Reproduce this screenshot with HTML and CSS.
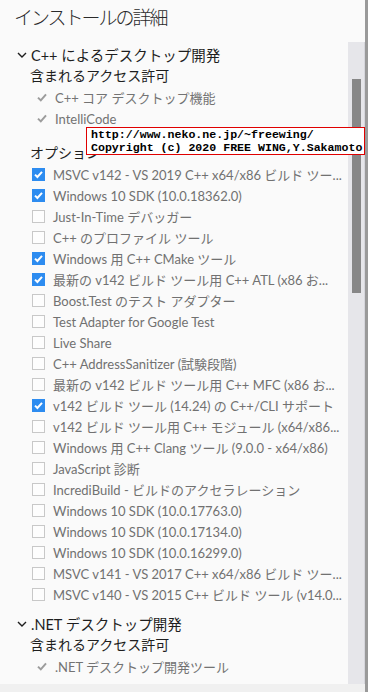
FILE: index.html
```html
<!DOCTYPE html>
<html lang="ja">
<head>
  <meta charset="UTF-8">
  <title>インストールの詳細</title>
  <link rel="stylesheet" href="styles.css">
</head>
<body>
  <div class="window">
    <h1 class="title">インストールの詳細</h1>
    <div class="main">
      <div class="content">
        <div class="group-head">
          <svg class="chevron" width="10" height="6" viewBox="0 0 10 6"><path d="M1 1 L5 5 L9 1" fill="none" stroke="#1e1e1e" stroke-width="1.4"/></svg>
          <span>C++ によるデスクトップ開発</span>
        </div>
        <div class="sub-head">含まれるアクセス許可</div>
        <div class="perm"><svg class="tick" width="10" height="9" viewBox="0 0 10 9"><path d="M1 4.6 L3.8 7.4 L9 1.4" fill="none" stroke="#9c9c9c" stroke-width="2"/></svg>C++ コア デスクトップ機能</div>
        <div class="perm"><svg class="tick" width="10" height="9" viewBox="0 0 10 9"><path d="M1 4.6 L3.8 7.4 L9 1.4" fill="none" stroke="#9c9c9c" stroke-width="2"/></svg>IntelliCode</div>
        <div class="sub-head options-head">オプション</div>
        <ul class="options">
          <li><span class="box checked"></span>MSVC v142 - VS 2019 C++ x64/x86 ビルド ツー...</li>
          <li><span class="box checked"></span>Windows 10 SDK (10.0.18362.0)</li>
          <li><span class="box"></span>Just-In-Time デバッガー</li>
          <li><span class="box"></span>C++ のプロファイル ツール</li>
          <li><span class="box checked"></span>Windows 用 C++ CMake ツール</li>
          <li><span class="box checked"></span>最新の v142 ビルド ツール用 C++ ATL (x86 お...</li>
          <li><span class="box"></span>Boost.Test のテスト アダプター</li>
          <li><span class="box"></span>Test Adapter for Google Test</li>
          <li><span class="box"></span>Live Share</li>
          <li><span class="box"></span>C++ AddressSanitizer (試験段階)</li>
          <li><span class="box"></span>最新の v142 ビルド ツール用 C++ MFC (x86 お...</li>
          <li><span class="box checked"></span>v142 ビルド ツール (14.24) の C++/CLI サポート</li>
          <li><span class="box"></span>v142 ビルド ツール用 C++ モジュール (x64/x86...</li>
          <li><span class="box"></span>Windows 用 C++ Clang ツール (9.0.0 - x64/x86)</li>
          <li><span class="box"></span>JavaScript 診断</li>
          <li><span class="box"></span>IncrediBuild - ビルドのアクセラレーション</li>
          <li><span class="box"></span>Windows 10 SDK (10.0.17763.0)</li>
          <li><span class="box"></span>Windows 10 SDK (10.0.17134.0)</li>
          <li><span class="box"></span>Windows 10 SDK (10.0.16299.0)</li>
          <li><span class="box"></span>MSVC v141 - VS 2017 C++ x64/x86 ビルド ツー...</li>
          <li><span class="box"></span>MSVC v140 - VS 2015 C++ ビルド ツール (v14.0...</li>
        </ul>
        <div class="group-head net-head">
          <svg class="chevron" width="10" height="6" viewBox="0 0 10 6"><path d="M1 1 L5 5 L9 1" fill="none" stroke="#1e1e1e" stroke-width="1.4"/></svg>
          <span>.NET デスクトップ開発</span>
        </div>
        <div class="sub-head">含まれるアクセス許可</div>
        <div class="perm"><svg class="tick" width="10" height="9" viewBox="0 0 10 9"><path d="M1 4.6 L3.8 7.4 L9 1.4" fill="none" stroke="#9c9c9c" stroke-width="2"/></svg>.NET デスクトップ開発ツール</div>
      </div>
      <div class="scrollbar"><div class="thumb"></div></div>
    </div>
    <div class="footer"></div>
  </div>
  <div class="stamp">http://www.neko.ne.jp/~freewing/<br>Copyright (c) 2020 FREE WING,Y.Sakamoto</div>
</body>
</html>
```
FILE: styles.css
```css
html, body {
  margin: 0;
  padding: 0;
}
body {
  background-color: #fafafa;
  font-family: Lato, "Noto Sans CJK JP", sans-serif;
  color: #1e1e1e;
  width: 368px;
  height: 692px;
  overflow: hidden;
}
.window {
  width: 365px;
  height: 692px;
  border-right: 3px solid #9a9a9a;
  display: flex;
  flex-direction: column;
}
.title {
  margin: 0;
  height: 42px;
  padding-left: 14px;
  font-family: "Noto Sans CJK JP", sans-serif;
  font-weight: 300;
  font-size: 19px;
  letter-spacing: -2px;
  line-height: 34px;
  color: #2a2a2a;
}
.main {
  display: flex;
  height: 642px;
}
.content {
  width: 348px;
  overflow: hidden;
  padding-top: 2px;
  font-size: 13px;
}
.group-head {
  display: flex;
  align-items: center;
  height: 21px;
  padding-left: 17px;
  font-size: 14.5px;
}
.chevron {
  margin-right: 4px;
}
.sub-head {
  height: 22px;
  line-height: 22px;
  padding-left: 30px;
  font-size: 14px;
}
.options-head {
  margin-top: 13px;
}
.perm {
  display: flex;
  align-items: center;
  height: 21px;
  padding-left: 37px;
  color: #737373;
  white-space: nowrap;
}
.tick {
  margin-right: 8px;
}
.options {
  list-style: none;
  margin: 0;
  padding: 0;
}
.options li {
  display: flex;
  align-items: center;
  height: 21px;
  padding-left: 32px;
  color: #717171;
  white-space: nowrap;
}
.box {
  width: 11px;
  height: 11px;
  border: 1px solid #c8c8c8;
  background-color: #fdfdfd;
  margin-right: 8px;
  flex-shrink: 0;
}
.box.checked {
  border-color: #2d8cf0;
  background-color: #2d8cf0;
  background-image: url("data:image/svg+xml;utf8,<svg xmlns='http://www.w3.org/2000/svg' width='11' height='11' viewBox='0 0 11 11'><path d='M2 5.6 L4.4 8 L9 2.8' fill='none' stroke='white' stroke-width='2'/></svg>");
}
.net-head {
  margin-top: 8px;
}
.scrollbar {
  width: 17px;
  background-color: #e6e6ea;
  border-right: 1px solid #d6d6dc;
  box-sizing: border-box;
  padding-top: 37px;
  padding-left: 4px;
}
.thumb {
  width: 9px;
  height: 214px;
  background-color: #878787;
}
.footer {
  flex: 1;
  background-color: #f0f0f0;
}
.stamp {
  position: absolute;
  left: 86px;
  top: 127px;
  width: 273px;
  height: 26px;
  padding-left: 4px;
  border: 1px solid #e00000;
  background-color: #ffffff;
  color: #000000;
  font-family: "Liberation Mono", monospace;
  font-weight: bold;
  font-size: 11.6px;
  line-height: 13px;
}
```
